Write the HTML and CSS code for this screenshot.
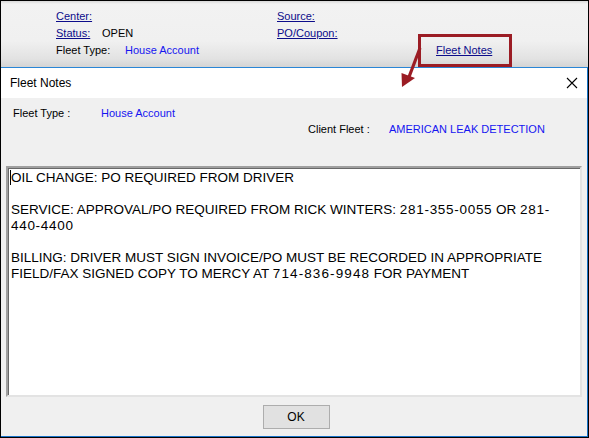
FILE: index.html
```html
<!DOCTYPE html>
<html>
<head>
<meta charset="utf-8">
<link rel="stylesheet" href="styles.css">
</head>
<body>
<div class="frame">
  <div class="top">
    <div class="topgrid">
      <div class="cell"><a class="lnk">Center:</a></div>
      <div class="cell"><a class="lnk">Source:</a></div>
      <div class="cell"></div>
      <div class="cell"><a class="lnk lbl-status">Status:</a><span>OPEN</span></div>
      <div class="cell"><a class="lnk">PO/Coupon:</a></div>
      <div class="cell"></div>
      <div class="cell"><span class="lbl-ft">Fleet Type:</span><span class="val">House Account</span></div>
      <div class="cell"></div>
      <div class="cell"><a class="lnk">Fleet Notes</a></div>
    </div>
  </div>
  <div class="dialog">
    <div class="titlebar">
      <span class="title">Fleet Notes</span>
      <svg class="close" width="12" height="12" viewBox="0 0 12 12"><path d="M1 1 L11 11 M11 1 L1 11" stroke="#000" stroke-width="1.1" fill="none"/></svg>
    </div>
    <div class="dbody">
      <div class="info">
        <div class="inforow"><span class="ilbl">Fleet Type :</span><span class="val">House Account</span></div>
        <div class="inforow right"><span class="ilbl2">Client Fleet :</span><span class="val">AMERICAN LEAK DETECTION</span></div>
      </div>
      <div class="notes">
        <p><span class="caret"></span>OIL CHANGE: PO REQUIRED FROM DRIVER</p>
        <p>SERVICE: APPROVAL/PO REQUIRED FROM RICK WINTERS: <span class="num">281-355-0055</span> OR <span class="num">281-</span><br><span class="num">440-4400</span></p>
        <p>BILLING: DRIVER MUST SIGN INVOICE/PO MUST BE RECORDED IN APPROPRIATE<br>FIELD/FAX SIGNED COPY TO MERCY AT <span class="num wide">714-836-9948</span> FOR PAYMENT</p>
      </div>
      <div class="footer"><button class="ok">OK</button></div>
    </div>
  </div>
  <div class="redbox"></div>
  <svg class="arrow" width="40" height="50" viewBox="0 0 40 50">
    <path d="M20 2 L9 31" stroke="#9b1c24" stroke-width="3.2" fill="none"/>
    <path d="M2 41 L1.5 27 L15 32 Z" fill="#9b1c24"/>
  </svg>
</div>
</body>
</html>
```
FILE: styles.css
```css
html, body { margin: 0; padding: 0; }
body { font-family: "Liberation Sans", Arial, sans-serif; }
.frame {
  position: relative;
  width: 589px; height: 438px;
  box-sizing: border-box;
  border: 1px solid #000;
  display: flex; flex-direction: column;
  background: #f0f0f0;
  overflow: hidden;
}
.top {
  height: 66px;
  box-sizing: border-box;
  padding: 6px 0 0 55px;
  background: linear-gradient(#d8d8d8 0px, #f2f2f2 3px, #f0f0f0 40px, #e2e2e2 58px, #d4d4d4 66px);
  font-size: 11px;
  color: #000;
}
.topgrid {
  display: grid;
  grid-template-columns: 221px 159px auto;
  grid-auto-rows: 17px;
}
.cell { display: flex; align-items: center; white-space: nowrap; }
.lnk { color: #0c0c8a; text-decoration: underline; }
.lbl-status { width: 46px; display: inline-block; }
.lbl-ft { width: 69px; display: inline-block; }
.val { color: #1515f0; }
.dialog {
  flex: 1;
  display: flex; flex-direction: column;
  border: 1px solid #1a73c8;
  border-top-color: #2a86d6;
  margin-left: -1px;
  background: #f0f0f0;
}
.titlebar {
  height: 30px;
  background: #fff;
  display: flex; align-items: center; justify-content: space-between;
  padding: 0 9px 0 9px;
  font-size: 12px;
}
.title { color: #000; }
.close { display: block; }
.dbody { flex: 1; display: flex; flex-direction: column; }
.info { font-size: 11px; padding: 6px 0 0 12px; height: 68px; box-sizing: border-box; }
.inforow { display: flex; align-items: center; height: 17px; }
.inforow.right { padding-left: 295px; margin-top: -1px; }
.ilbl { width: 88px; }
.ilbl2 { width: 81px; }
.notes {
  margin: 0 5px 0 5px;
  height: 231px;
  box-sizing: border-box;
  background: #fff;
  border-style: solid;
  border-width: 2px;
  border-color: #a0a0a0 #e3e3e3 #e3e3e3 #a0a0a0;
  box-shadow: inset 1px 1px 0 #696969;
  padding: 2px 3px;
  font-size: 13.5px;
  line-height: 16px;
  color: #000;
}
.notes p { margin: 0 0 16px 0; }
.num { letter-spacing: 0.7px; }
.num.wide { letter-spacing: 1.1px; }
.caret { display: inline-block; width: 1px; height: 15px; background: #000; vertical-align: -3px; margin-right: 0; margin-left: -1px; }
.footer { flex: 1; display: flex; align-items: center; justify-content: center; padding: 1px 0 0 4px; }
.ok {
  width: 67px; height: 24px;
  font-family: "Liberation Sans", Arial, sans-serif;
  font-size: 12px;
  background: #e1e1e1;
  border: 1px solid #adadad;
  color: #000;
  padding: 0;
}
.redbox {
  position: absolute;
  left: 417px; top: 33px;
  width: 88px; height: 27px;
  border: 3px solid #9b1c24;
}
.arrow {
  position: absolute;
  left: 399px; top: 45px;
}
```
